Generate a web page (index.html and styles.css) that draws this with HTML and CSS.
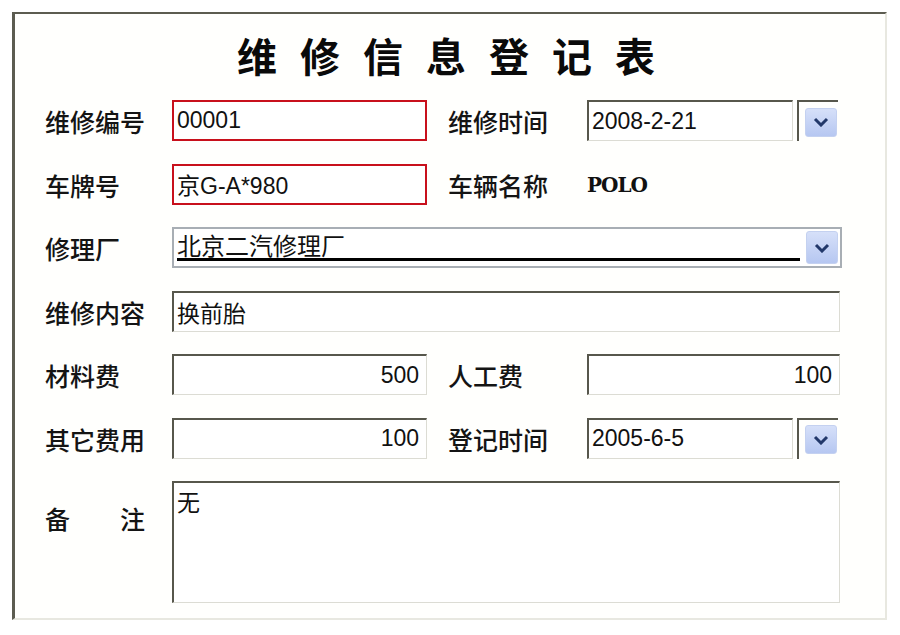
FILE: index.html
```html
<!DOCTYPE html>
<html lang="zh-CN">
<head>
<meta charset="utf-8">
<title>维修信息登记表</title>
<link rel="stylesheet" href="styles.css">
</head>
<body>
<div class="panel">
  <h1 class="title">维修信息登记表</h1>
  <div class="form">
    <div class="label">维修编号</div>
    <div class="field red">00001</div>
    <div class="label label2">维修时间</div>
    <div class="datebox">
      <div class="field sunken">2008-2-21</div>
      <div class="btnframe"><span class="dropbtn"><svg viewBox="0 0 16 10" width="16" height="10"><path d="M2 2 L8 8 L14 2" fill="none" stroke="#22386a" stroke-width="3"/></svg></span></div>
    </div>

    <div class="label">车牌号</div>
    <div class="field red">京G-A*980</div>
    <div class="label label2">车辆名称</div>
    <div class="plain">POLO</div>

    <div class="label">修理厂</div>
    <div class="combo span3">
      <span class="combo-text">北京二汽修理厂</span>
      <span class="dropbtn big"><svg viewBox="0 0 16 10" width="16" height="10"><path d="M2 2 L8 8 L14 2" fill="none" stroke="#22386a" stroke-width="3"/></svg></span>
    </div>

    <div class="label">维修内容</div>
    <div class="field sunken span3">换前胎</div>

    <div class="label">材料费</div>
    <div class="field sunken num">500</div>
    <div class="label label2">人工费</div>
    <div class="field sunken num">100</div>

    <div class="label">其它费用</div>
    <div class="field sunken num">100</div>
    <div class="label label2">登记时间</div>
    <div class="datebox">
      <div class="field sunken">2005-6-5</div>
      <div class="btnframe"><span class="dropbtn"><svg viewBox="0 0 16 10" width="16" height="10"><path d="M2 2 L8 8 L14 2" fill="none" stroke="#22386a" stroke-width="3"/></svg></span></div>
    </div>

    <div class="label top">备　　注</div>
    <div class="field sunken span3 area">无</div>
  </div>
</div>
</body>
</html>
```

FILE: styles.css
```css
html, body {
  margin: 0;
  padding: 0;
  background: #ffffff;
}

body {
  font-family: "Noto Sans CJK SC", sans-serif;
  color: #111;
}

.panel {
  box-sizing: border-box;
  margin: 12px 0 0 12px;
  width: 875px;
  height: 608px;
  background: #fffffd;
  border-top: 2px solid #5c5c50;
  border-left: 3px solid #5c5c50;
  border-right: 2px solid #e8e8e0;
  border-bottom: 2px solid #e8e8e0;
  padding: 0 0 0 30px;
}

.title {
  margin: 17px 0 0 -30px;
  height: 48px;
  line-height: 48px;
  font-size: 40px;
  font-weight: 700;
  text-align: center;
  letter-spacing: 23px;
  padding-left: 15px;
  color: #0a0a0a;
}

.form {
  margin-top: 21px;
  display: grid;
  grid-template-columns: 127px 255px 160px 253px;
  grid-template-rows: repeat(6, 41px) 122px;
  row-gap: 22.5px;
}

.label {
  display: flex;
  align-items: center;
  font-size: 25px;
  line-height: 1;
  font-weight: 500;
  white-space: pre;
  color: #141414;
  margin-top: 2px;
}

.label2 {
  padding-left: 21px;
}

.label.top {
  align-items: flex-start;
  padding-top: 25px;
  margin-top: 0;
}

.field {
  box-sizing: border-box;
  display: flex;
  align-items: center;
  font-family: "Liberation Sans", "Noto Sans CJK SC", sans-serif;
  font-size: 23px;
  color: #111;
  background: #fff;
  padding: 0 0 0 3px;
  white-space: nowrap;
}

.red {
  border: 2px solid #c8101c;
}

.sunken {
  border-top: 2px solid #57574c;
  border-left: 2px solid #57574c;
  border-right: 1px solid #dcdcd4;
  border-bottom: 1px solid #dcdcd4;
}

.num {
  justify-content: flex-end;
  padding: 0 7px 0 0;
}

.span3 {
  grid-column: 2 / 5;
}

.area {
  align-items: flex-start;
  padding-top: 1px;
}

.plain {
  display: flex;
  align-items: center;
  font-family: "DejaVu Serif", serif;
  font-size: 20px;
  font-weight: 700;
  letter-spacing: -1px;
  color: #111;
  padding-top: 2px;
}

.datebox {
  display: flex;
  gap: 4px;
  width: 251px;
}

.datebox .field {
  flex: 1;
}

.btnframe {
  box-sizing: border-box;
  width: 41px;
  border-top: 2px solid #57574c;
  border-left: 2px solid #57574c;
  display: flex;
  align-items: center;
  justify-content: flex-end;
  padding: 4px 1px 3px 0;
}

.dropbtn {
  box-sizing: border-box;
  width: 32px;
  height: 29px;
  flex: none;
  display: flex;
  align-items: center;
  justify-content: center;
  background: linear-gradient(#d6e0f9, #b6c7f1);
  border: 1px solid #c4d1f0;
  border-radius: 3px;
}

.combo {
  box-sizing: border-box;
  display: flex;
  align-items: center;
  border: 2px solid #a8aeb4;
  background: #fff;
  padding: 0 2px 0 3px;
  margin-right: -2px;
}

.combo-text {
  flex: 1;
  align-self: stretch;
  display: flex;
  align-items: center;
  font-size: 24px;
  border-bottom: 3px solid #000;
  margin: 0 6px 5px 0;
  padding-top: 3px;
  line-height: 1;
}

.dropbtn.big {
  height: 33px;
  width: 32px;
}
```
